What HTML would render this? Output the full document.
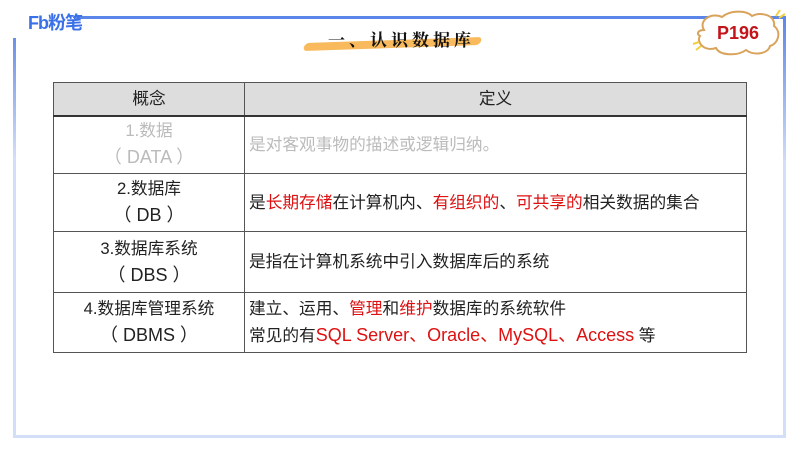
<!DOCTYPE html>
<html><head><meta charset="utf-8"><style>
*{margin:0;padding:0;box-sizing:border-box}
body{width:800px;height:450px;background:#fff;position:relative;overflow:hidden;font-family:"Liberation Sans","Noto Sans CJK SC",sans-serif}
.frame{position:absolute;left:13px;top:38px;width:773px;height:400px;border:3px solid #d3def7;border-top:none}
.top{position:absolute;left:74px;top:16px;width:712px;height:3px;background:#5a86ea}
.lv{position:absolute;left:13px;top:38px;width:3px;height:120px;background:linear-gradient(#6a90ea,#d3def7)}
.rv{position:absolute;left:783px;top:16px;width:3px;height:150px;background:linear-gradient(#5a86ea,#d3def7)}
.rv2{position:absolute;left:783px;top:160px;width:3px;height:278px;background:#d3def7}
.logo{position:absolute;left:28px;top:9px;font-size:18px;font-weight:bold;color:#3a70e8;letter-spacing:-1px}
.title{position:absolute;left:328px;top:26px;font-size:17px;font-weight:bold;color:#111;letter-spacing:4px;z-index:2;font-family:"Noto Serif CJK SC",serif}
.brush{position:absolute;left:305px;top:40px;width:175px;height:8px;background:#f7b24a;border-radius:5px;transform:skewX(-20deg) rotate(-2deg);opacity:.9}
table{position:absolute;left:53px;top:82px;width:694px;border-collapse:collapse;font-size:16.7px;color:#222}
td,th{border:1px solid #555;text-align:center;line-height:26px}
th{background:#ddd;font-weight:normal;height:33px;border-bottom:2px solid #333}
td.l{width:191px}
td.r{text-align:left;padding-left:4px}
.g{color:#bbb}.red{color:#d11}
.e{font-size:18px}
</style></head><body>
<div class="frame"></div><div class="top"></div><div class="lv"></div><div class="rv"></div><div class="rv2"></div>
<div class="logo">Fb粉笔</div>
<div class="brush"></div>
<div class="title">一、认识数据库</div>
<svg style="position:absolute;left:690px;top:8px" width="100" height="50">
<path d="M14 22 C8 12 22 4 32 9 C40 2 56 2 62 8 C72 3 86 8 84 18 C92 24 88 36 80 38 C78 46 64 48 56 42 C48 48 30 48 26 40 C14 44 6 34 10 28 C6 26 8 22 14 22Z" fill="#fff" stroke="#d9a35c" stroke-width="2"/>
<text x="48" y="31" text-anchor="middle" font-family="Liberation Sans,sans-serif" font-size="18" font-weight="bold" fill="#c4141b">P196</text>
<path d="M90 2 L86 8 M95 6 L89 10 M3 36 L9 34 M6 42 L11 38" stroke="#f0d040" stroke-width="2"/>
</svg>
<table>
<tr><th>概念</th><th>定义</th></tr>
<tr style="height:58px"><td class="l g">1.数据<br><span class="e">（ DATA ）</span></td><td class="r g">是对客观事物的描述或逻辑归纳。</td></tr>
<tr style="height:58px"><td class="l">2.数据库<br><span class="e">（ DB ）</span></td><td class="r">是<span class="red">长期存储</span>在计算机内、<span class="red">有组织的</span>、<span class="red">可共享的</span>相关数据的集合</td></tr>
<tr style="height:61px"><td class="l">3.数据库系统<br><span class="e">（ DBS ）</span></td><td class="r">是指在计算机系统中引入数据库后的系统</td></tr>
<tr style="height:60px"><td class="l">4.数据库管理系统<br><span class="e">（ DBMS ）</span></td><td class="r">建立、运用、<span class="red">管理</span>和<span class="red">维护</span>数据库的系统软件<br>常见的有<span class="red e">SQL Server、Oracle、MySQL、Access</span> 等</td></tr>
</table>
</body></html>
